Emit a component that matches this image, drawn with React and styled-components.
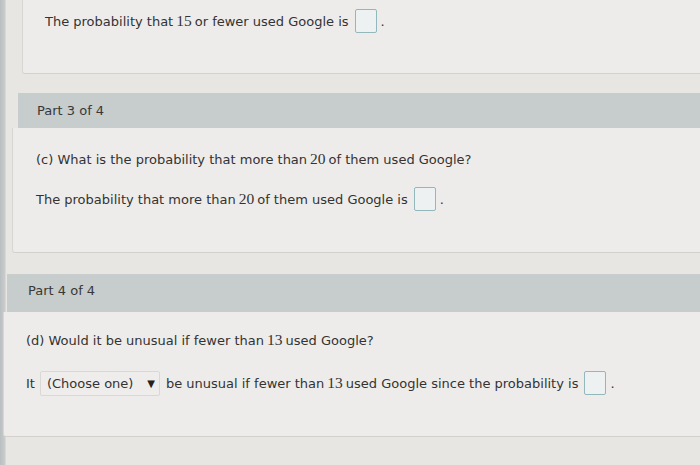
import styled, { createGlobalStyle } from "styled-components"

const GlobalStyle = createGlobalStyle`
  body {
    margin: 0;
    background: #e8e6e3;
    font-family: "DejaVu Sans", Verdana, sans-serif;
    color: #333;
  }
`

const Page = styled.div`
  width: 700px;
  height: 465px;
  overflow: hidden;
  display: flex;
  flex-direction: column;
  background: linear-gradient(90deg, #b9bfc0 0, #c9cccc 5px, #e8e6e3 6px);
`

const Card = styled.div`
  margin-left: ${(props) => props.$left}px;
  height: ${(props) => props.$height}px;
  box-sizing: border-box;
  padding: ${(props) => props.$top}px 0 0 ${(props) => props.$indent}px;
  background: #eeecea;
  border-left: 1px solid #d8d5d2;
  border-bottom: 1px solid #d3d0cd;
  border-bottom-left-radius: 3px;
  display: flex;
  flex-direction: column;
  gap: ${(props) => props.$gap || 0}px;
`

const PartHeader = styled.div`
  margin-top: ${(props) => props.$gapAbove}px;
  margin-left: ${(props) => props.$left}px;
  height: ${(props) => props.$height}px;
  padding-left: ${(props) => props.$indent}px;
  padding-bottom: ${(props) => props.$lift || 0}px;
  box-sizing: border-box;
  background: #c7cccc;
  display: flex;
  align-items: center;
  font-size: 13px;
  color: #383838;
`

const Line = styled.div`
  display: flex;
  align-items: center;
  height: 26px;
  font-size: 13px;
  white-space: pre;
`

const Num = styled.span`
  font-family: "Liberation Serif", "Times New Roman", serif;
  font-size: 15.5px;
  margin: 0 3px;
`

const AnswerBox = styled.span`
  display: inline-block;
  width: 20px;
  height: 22px;
  margin-left: 6px;
  border: 1px solid #93b8bb;
  border-radius: 2px;
  background: #eef1f1;
`

const Period = styled.span`
  margin-left: 4px;
`

const Select = styled.span`
  display: inline-flex;
  align-items: center;
  justify-content: space-between;
  box-sizing: border-box;
  width: 120px;
  height: 25px;
  margin: 0 6px 0 5px;
  padding: 0 4px 0 6px;
  border: 1px solid #dad8d5;
  border-radius: 2px;
  background: #efedeb;
`

const Arrow = styled.span`
  font-size: 10px;
  color: #222;
`

export default function App() {
  return (
    <>
      <GlobalStyle />
      <Page>
        <Card $left={22} $height={74} $top={8} $indent={22}>
          <Line>
            The probability that<Num>15</Num>or fewer used Google is
            <AnswerBox />
            <Period>.</Period>
          </Line>
        </Card>

        <PartHeader $gapAbove={19} $left={18} $height={35} $indent={19}>
          Part 3 of 4
        </PartHeader>
        <Card $left={12} $height={125} $top={18} $indent={23} $gap={14}>
          <Line>
            (c) What is the probability that more than<Num>20</Num>of them used Google?
          </Line>
          <Line>
            The probability that more than<Num>20</Num>of them used Google is
            <AnswerBox />
            <Period>.</Period>
          </Line>
        </Card>

        <PartHeader $gapAbove={21} $left={7} $height={38} $indent={21} $lift={6}>
          Part 4 of 4
        </PartHeader>
        <Card $left={3} $height={125} $top={15} $indent={22} $gap={17}>
          <Line>
            (d) Would it be unusual if fewer than<Num>13</Num>used Google?
          </Line>
          <Line>
            It
            <Select>
              (Choose one)
              <Arrow>▼</Arrow>
            </Select>
            be unusual if fewer than<Num>13</Num>used Google since the probability is
            <AnswerBox />
            <Period>.</Period>
          </Line>
        </Card>
      </Page>
    </>
  )
}
